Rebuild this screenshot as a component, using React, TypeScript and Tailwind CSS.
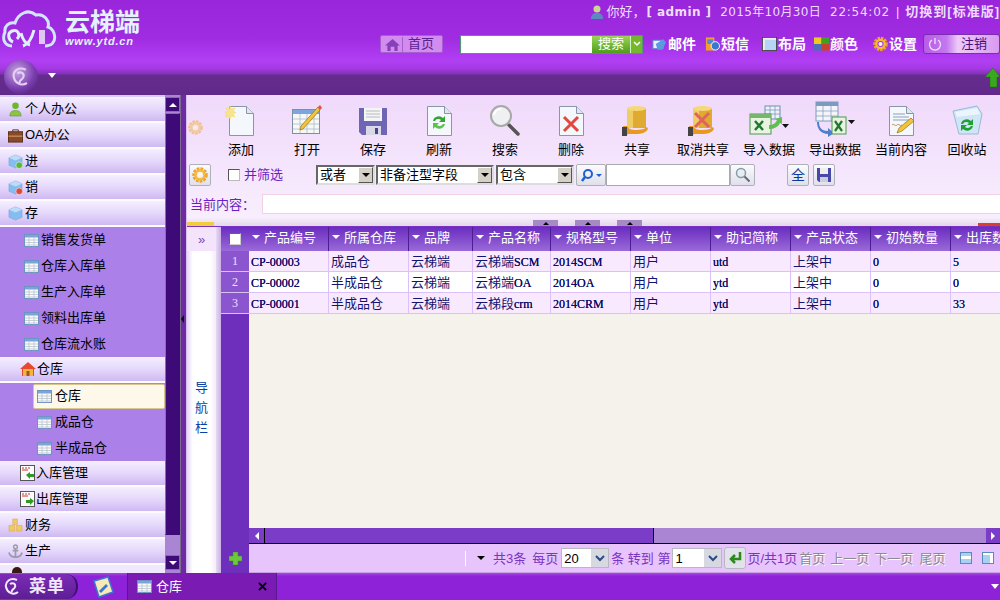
import type { ReactNode } from "react";

const FONT = "[font-family:'Liberation_Sans','Noto_Sans_CJK_SC',sans-serif]";

// little XP style icons
function Sheet({ className = "w-[15px] h-[13px]" }: { className?: string }) {
  return (
    <svg viewBox="0 0 15 13" className={className}>
      <rect x="0.5" y="0.5" width="14" height="12" fill="#fbfbfb" stroke="#6f93c4" />
      <rect x="1" y="1" width="13" height="2.5" fill="#7ba4d8" />
      <path d="M1 6h13M1 8.5h13M1 11h13M5 3.5v9M10 3.5v9" stroke="#b9c3cf" strokeWidth="0.8" />
    </svg>
  );
}

function Page({ children }: { children?: ReactNode }) {
  return (
    <svg viewBox="0 0 32 32" className="w-8 h-8">
      <path d="M4.5 1.5h17l7 7v22h-24z" fill="#f4f8fd" stroke="#8996a8" />
      <path d="M21.5 1.5v7h7" fill="#dfe6ef" stroke="#8996a8" />
      {children}
    </svg>
  );
}

function Barrel({ cross }: { cross?: boolean }) {
  return (
    <svg viewBox="0 0 32 32" className="w-8 h-8">
      <rect x="6" y="3" width="19" height="20" fill="#e0a92f" />
      <rect x="6" y="3" width="6" height="20" fill="#f0cc66" />
      <ellipse cx="15.5" cy="3.5" rx="9.5" ry="2.5" fill="#f5d878" />
      <path d="M3 21h3c2 3 4 4 9 4s9-1 11-3l1 2c-2 4-7 5-12 5H7l-1 1H2v-9z" fill="#e89a1f" />
      <rect x="1" y="22" width="5" height="9" fill="#444" />
      {cross && <path d="M8 8l14 14M22 8L8 22" stroke="#e0645e" strokeWidth="3" />}
    </svg>
  );
}

function Caret({ className = "" }: { className?: string }) {
  return <span className={`inline-block w-0 h-0 border-x-[4px] border-x-transparent border-t-[4px] border-t-black ${className}`} />;
}

function ToolIcon({ name }: { name: string }) {
  if (name === "添加")
    return (
      <Page>
        <path d="M5 1l1.5 3L10 3 8 6l3 1.500-3 1.500 2 3-3.500-1L5 14l-1.500-3L0 12l2-3-2-1.500L3 6 1 3l3.500 1z" fill="#f6e58a" stroke="#f7d95a" strokeWidth="0.5" />
      </Page>
    );
  if (name === "打开")
    return (
      <svg viewBox="0 0 32 32" className="w-8 h-8">
        <rect x="1.500" y="4.500" width="27" height="24" fill="#f7f8f6" stroke="#7e8fa3" />
        <rect x="2" y="5" width="26" height="4" fill="#7ba7dc" />
        <path d="M2 14h26M2 19h26M2 24h26M9 9v19M16 9v19M23 9v19" stroke="#a6bccd" strokeWidth="0.8" />
        <path d="M9 25l3-1L29 5l-2-3L10 21z" fill="#f2c43a" stroke="#9a6e1c" strokeWidth="0.7" />
        <path d="M27 2l2 3 2-2-2-3z" fill="#d9534f" />
      </svg>
    );
  if (name === "保存")
    return (
      <svg viewBox="0 0 32 32" className="w-8 h-8">
        <path d="M2 3h28v27H5l-3-3z" fill="#6e65b5" />
        <rect x="7" y="3" width="18" height="13" fill="#f5f5f5" />
        <path d="M9 6h14M9 9h14M9 12h14" stroke="#b8b8c8" />
        <rect x="9" y="21" width="15" height="9" fill="#d8d8e6" />
        <rect x="18" y="23" width="3" height="6" fill="#4a4488" />
      </svg>
    );
  if (name === "刷新")
    return (
      <Page>
        <path d="M10 16a6 6 0 0 1 10-3l2-2v6h-6l2-2a4 4 0 0 0-6 1z" fill="#35a335" />
        <path d="M22 19a6 6 0 0 1-10 3l-2 2v-6h6l-2 2a4 4 0 0 0 6-1z" fill="#5cc24a" />
      </Page>
    );
  if (name === "搜索")
    return (
      <svg viewBox="0 0 32 32" className="w-8 h-8">
        <path d="M20 20l9 9" stroke="#555" strokeWidth="3.500" strokeLinecap="round" />
        <circle cx="12" cy="11" r="10" fill="#eef0f2" stroke="#a8a8a8" strokeWidth="2" />
        <path d="M5 10a7 7 0 0 1 7-6" stroke="#fff" strokeWidth="2" fill="none" />
      </svg>
    );
  if (name === "删除")
    return (
      <Page>
        <path d="M9 12l14 14M23 12L9 26" stroke="#e2483c" strokeWidth="3" />
      </Page>
    );
  if (name === "共享") return <Barrel />;
  if (name === "取消共享") return <Barrel cross />;
  if (name === "导入数据")
    return (
      <svg viewBox="0 0 40 32" className="w-10 h-8">
        <rect x="16" y="1" width="15" height="13" fill="#eef2f8" stroke="#6f8fb5" />
        <path d="M16 5h15M16 9h15M21 1v13M26 1v13" stroke="#6f8fb5" strokeWidth="0.7" />
        <rect x="1" y="9" width="21" height="20" fill="#e8f3e2" stroke="#4a9a4a" />
        <rect x="1" y="9" width="21" height="4" fill="#74b86a" />
        <path d="M6 16l8 9M14 16l-8 9" stroke="#1f7a2e" strokeWidth="2.500" />
        <path d="M20 20c4 0 7-2 8-5l-2-1 7-2v7l-2-1c-2 4-6 6-11 6z" fill="#5cbf4f" />
        <path d="M33 19h7l-3.500 4z" fill="#111" />
      </svg>
    );
  if (name === "导出数据")
    return (
      <svg viewBox="0 0 40 36" className="w-10 h-9">
        <rect x="1" y="1" width="22" height="19" fill="#f3f5f9" stroke="#7f9ac0" />
        <rect x="1" y="1" width="22" height="4" fill="#7f9ac0" />
        <path d="M1 10h22M1 15h22M8 1v19M16 1v19" stroke="#7f9ac0" strokeWidth="0.7" />
        <path d="M4 21c0 6 3 9 9 9v-3l6 5-6 4v-3C6 33 2 28 2 21z" fill="#4b7fd0" />
        <rect x="17" y="16" width="14" height="17" fill="#e8f3e2" stroke="#4a9a4a" />
        <path d="M20 20l7 10M27 20l-7 10" stroke="#1f7a2e" strokeWidth="2.200" />
        <path d="M33 19h7l-3.500 4z" fill="#111" />
      </svg>
    );
  if (name === "当前内容")
    return (
      <Page>
        <path d="M8 9h12M8 12h16M8 15h16" stroke="#8aa0bd" />
        <path d="M7 20c2-2 3 2 5 0s3 2 5 0" stroke="#c98a3a" fill="none" />
        <path d="M12 28l2-5 12-10 3 3-12 10z" fill="#f2c43a" stroke="#9a6e1c" strokeWidth="0.7" />
      </Page>
    );
  return (
    <svg viewBox="0 0 32 32" className="w-8 h-8">
      <path d="M2 6l24-5 5 8-4 20H8z" fill="#cfe6f7" stroke="#9ab9d6" />
      <path d="M4 7l22-4 3 6-23 3z" fill="#eaf5fd" />
      <path d="M10 19a6 6 0 0 1 10-3l2-2v6h-6l2-2a4 4 0 0 0-6 1z" fill="#22a035" />
      <path d="M22 21a6 6 0 0 1-10 3l-2 2v-6h6l-2 2a4 4 0 0 0 6-1z" fill="#22a035" />
    </svg>
  );
}

function Gear({ className = "w-4 h-4" }: { className?: string }) {
  return (
    <svg viewBox="0 0 16 16" className={className}>
      <circle cx="8" cy="8" r="6" fill="none" stroke="#f0a028" strokeWidth="3.500" strokeDasharray="2.500 1" />
      <circle cx="8" cy="8" r="4.500" fill="none" stroke="#f4b83a" strokeWidth="2.500" />
      <circle cx="8" cy="8" r="2.200" fill="#fff6e0" />
    </svg>
  );
}

function MenuIcon({ name }: { name: string }) {
  const cls = "w-[17px] h-[15px]";
  if (name === "个人办公")
    return (
      <svg viewBox="0 0 16 16" className={cls}>
        <circle cx="8" cy="4" r="3.500" fill="#6fb52f" />
        <path d="M2 15c0-5 3-6 6-6s6 1 6 6z" fill="#8bc540" stroke="#4f8a1c" strokeWidth="0.5" />
      </svg>
    );
  if (name === "OA办公")
    return (
      <svg viewBox="0 0 16 16" className={cls}>
        <rect x="0.500" y="4" width="15" height="11" fill="#8a4a2a" stroke="#5a2e18" />
        <path d="M5 4V2h6v2" stroke="#5a2e18" fill="none" />
        <rect x="0.500" y="8" width="15" height="1.500" fill="#c08a5a" />
      </svg>
    );
  if (name === "进" || name === "销" || name === "存")
    return (
      <svg viewBox="0 0 16 16" className={cls}>
        <path d="M1 4l7-3 7 3v8l-7 3-7-3z" fill="#86bdf0" stroke="#6f9fce" strokeWidth="0.5" />
        <path d="M1 4l7 3 7-3-7-3z" fill="#bcdcf8" />
        {name === "进" && <circle cx="12" cy="12" r="3.500" fill="#59b83a" stroke="#fff" strokeWidth="0.5" />}
        {name === "销" && <circle cx="12" cy="12" r="3.500" fill="#e0483a" stroke="#fff" strokeWidth="0.5" />}
      </svg>
    );
  if (name === "财务")
    return (
      <svg viewBox="0 0 16 16" className={cls}>
        <path d="M5 1h5v6H5zM1 8h6v6H1zM9 8h6v6H9z" fill="#f0c864" stroke="#d8a838" strokeWidth="0.5" />
      </svg>
    );
  if (name === "生产")
    return (
      <svg viewBox="0 0 16 16" className={cls}>
        <circle cx="8" cy="3" r="2" fill="none" stroke="#9a9aa8" strokeWidth="1.500" />
        <path d="M8 5v9M1 9c1 4 4 5 7 5s6-1 7-5M5 7h6" stroke="#9a9aa8" strokeWidth="1.800" fill="none" />
      </svg>
    );
  return null;
}

function Row({ name, indent }: { name: string; indent?: "house" | "in" | "out" }) {
  return (
    <div className="h-[26px] shrink-0 flex items-center border-b-2 border-b-white/80 bg-[linear-gradient(180deg,#f5efff_0%,#e5d8fb_50%,#cfb9f3_100%)] text-[13px] text-black">
      {indent === "house" ? (
        <svg viewBox="0 0 16 16" className="ml-5 w-4 h-4">
          <path d="M8 1l8 7h-2v7H2V8H0z" fill="#e8482e" />
          <rect x="3" y="8" width="10" height="7" fill="#f2b63c" />
          <rect x="6.500" y="10" width="3" height="5" fill="#9a5a1c" />
        </svg>
      ) : indent ? (
        <svg viewBox="0 0 15 16" className="ml-5 w-[15px] h-4">
          <rect x="0.500" y="0.500" width="14" height="15" fill="#fbfbfb" stroke="#555" />
          <path d="M2 3h2M5 3h2M8 3h2M2 5h6" stroke="#d0352c" />
          <path d={indent === "in" ? "M6 10l4-3v2h4v3h-4v2z" : "M14 10l-4-3v2H6v3h4v2z"} fill="#2f9a22" />
        </svg>
      ) : (
        <span className="ml-[7px] flex"><MenuIcon name={name} /></span>
      )}
      <span className="ml-px">{name}</span>
    </div>
  );
}

function Sub({ name, deep, active }: { name: string; deep?: boolean; active?: boolean }) {
  return (
    <div className="h-[26px] shrink-0 flex items-center bg-[#ab80e9] text-[13px] text-black">
      <div
        className={`h-[25px] flex items-center ${deep ? "ml-[33px] w-[132px] pl-[3px]" : "ml-[23px] pl-0"} ${
          active ? "bg-[#fdf8ea] border border-[#d8c890] rounded-[2px]" : "border border-transparent"
        }`}
      >
        <Sheet />
        <span className={deep ? "ml-[3px]" : "ml-[2px]"}>{name}</span>
      </div>
    </div>
  );
}

function SideScroll() {
  const Btn = ({ up }: { up?: boolean }) => (
    <div className="h-[15px] flex items-center justify-center bg-[#3d0a78] border border-[#e85a1a]">
      <span className={`w-0 h-0 border-x-[4px] border-x-transparent ${up ? "border-b-[4px] border-b-white" : "border-t-[4px] border-t-white"}`} />
    </div>
  );
  return (
    <div className="w-[16px] flex flex-col bg-[#a985d3] border-r border-[#7a6a90]">
      <div className="h-[2px]" />
      <Btn up />
      <div className="h-px" />
      <div className="h-[422px] bg-[#3d0a78] border border-[#e85a1a] border-r-[#3d0a78] border-b-[#3d0a78]" />
      <div className="flex-1" />
      <Btn />
      <div className="h-[3px]" />
    </div>
  );
}

function Sidebar() {
  return (
    <div className="w-[187px] shrink-0 flex bg-[#7b2bb5]">
      <div className="w-[165px] shrink-0 flex flex-col overflow-hidden bg-[#d9c9f6] pt-[2px]">
        <Row name="个人办公" />
        <Row name="OA办公" />
        <Row name="进" />
        <Row name="销" />
        <Row name="存" />
        <Sub name="销售发货单" />
        <Sub name="仓库入库单" />
        <Sub name="生产入库单" />
        <Sub name="领料出库单" />
        <Sub name="仓库流水账" />
        <Row name="仓库" indent="house" />
        <Sub name="仓库" deep active />
        <Sub name="成品仓" deep />
        <Sub name="半成品仓" deep />
        <Row name="入库管理" indent="in" />
        <Row name="出库管理" indent="out" />
        <Row name="财务" />
        <Row name="生产" />
        <div className="flex-1 bg-[#f0e8fd] pl-[12px]">
          <span className="block w-[10px] h-[8px] mt-[2px] rounded-t-full bg-[#3a1a10]" />
        </div>
      </div>
      <SideScroll />
      <div className="flex-1 flex items-center bg-[#6d2aa3] border-r border-[#d8c0f0]">
        <span className="w-0 h-0 mt-[-30px] border-y-[4px] border-y-transparent border-r-[3px] border-r-black" />
      </div>
    </div>
  );
}

function Header() {
  const links: [string, ReactNode, string][] = [
    ["邮件", <svg key="m" viewBox="0 0 16 16" className="w-[15px] h-4"><rect x="1" y="4" width="11" height="9" fill="#e8f0fa" stroke="#5a8ac8" /><path d="M4 8l8-5 3 3-4 8H6z" fill="#5a9ae0" /></svg>, "ml-[9px]"],
    ["短信", <svg key="s" viewBox="0 0 16 16" className="w-[15px] h-4"><rect x="1" y="1" width="9" height="14" fill="#f0a030" /><rect x="2.500" y="3" width="6" height="5" fill="#4a8ae0" /><circle cx="11" cy="10" r="4.500" fill="#3a78d0" stroke="#fff" /></svg>, "ml-[9px]"],
    ["布局", <svg key="l" viewBox="0 0 16 16" className="w-[15px] h-4"><rect x="0.500" y="1" width="15" height="14" fill="#b8d4f4" stroke="#444" /><rect x="1" y="1.500" width="14" height="2" fill="#eee" /><rect x="1" y="3.500" width="2" height="11" fill="#eee" /></svg>, "ml-[13px]"],
    ["颜色", <svg key="c" viewBox="0 0 16 16" className="w-[15px] h-4"><rect x="0" y="1" width="8" height="7" fill="#f0c820" /><rect x="8" y="1" width="8" height="7" fill="#40a020" /><rect x="0" y="8" width="8" height="7" fill="#4a70b8" /><rect x="8" y="8" width="8" height="7" fill="#c84030" /></svg>, "ml-[8px]"],
    ["设置", <Gear key="g" className="w-[15px] h-4" />, "ml-[15px]"],
  ];
  return (
    <div className="h-[95px] shrink-0 flex flex-col bg-[linear-gradient(180deg,#9a26dc_0%,#a02ce2_40%,#b13ff4_64%,#a639e4_72%,#7f33b4_78%,#652c8e_79%,#602a8a_100%)]">
      <div className="h-[60px] flex">
        <div className="w-[140px] shrink-0 flex pt-[8px] pl-[2px]">
          <svg viewBox="0 0 60 40" className="w-[60px] h-[40px]">
            <path d="M10 38C2 38 0 30 3 24c-1-6 4-10 10-9C16 6 26 0 34 7c8-2 14 6 12 12 8 2 11 19-3 19" fill="none" stroke="#cfe6fb" strokeWidth="3" />
            <path d="M11 34c-5-2-6-9-1-11 6-2 9 4 5 8M19 25c2 8 5 11 9 12M32 22c-2 8-5 14-11 16" fill="none" stroke="#dff0fd" strokeWidth="3" />
            <rect x="37" y="22" width="6" height="14" fill="#e0c8f5" />
          </svg>
          <div className="text-[#e4f2fd] ml-[3px] mt-[1px]">
            <div className={`text-[25px] leading-[26px] font-bold ${FONT}`}>云梯端</div>
            <div className="text-[11px] leading-[12px] font-bold italic tracking-[0.8px] [font-family:'Liberation_Sans',sans-serif]">www.ytd.cn</div>
          </div>
        </div>
        <div className="flex-1 min-w-0 flex flex-col">
          <div className="h-[24px] flex items-center justify-end text-[13px] text-[#eedcfb] whitespace-nowrap overflow-hidden">
            <svg viewBox="0 0 14 14" className="w-[14px] h-[14px]">
              <circle cx="7" cy="4" r="3.500" fill="#c8d890" />
              <path d="M1 14c0-5 3-6 6-6s6 1 6 6z" fill="#5a8ac0" />
            </svg>
            <span className="ml-[3px]">你好，</span>
            <span className="ml-px font-bold tracking-[0.4px] [font-family:'DejaVu_Sans','Noto_Sans_CJK_SC',sans-serif] text-[12px]">[ admin ]</span>
            <span className="ml-[9px] tracking-[0.33px] [font-family:'DejaVu_Sans','Noto_Sans_CJK_SC',sans-serif] text-[12px]">2015年10月30日</span>
            <span className="ml-[9px] tracking-[0.75px] [font-family:'DejaVu_Sans',sans-serif] text-[12px]">22:54:02</span>
            <span className="ml-[6px]">|</span>
            <span className="ml-[6px] font-bold tracking-[1px]">切换到[标准版]</span>
          </div>
          <div className="h-[24px] mt-[8px] flex items-center text-[13px] whitespace-nowrap">
            <div className="ml-[240px] w-[63px] h-[18px] shrink-0 flex items-center rounded-[2px] bg-[#d28cf0] border border-[#a75fd0]">
              <svg viewBox="0 0 16 14" className="ml-[4px] w-[15px] h-[13px]">
                <path d="M8 1L0 8h2.500v6H6V9.500h4V14h3.500V8H16z" fill="#8840b8" />
              </svg>
              <span className="ml-[2px] w-px h-[15px] bg-[#a75fd0]" />
              <span className="ml-[5px] text-[#5a2190]">首页</span>
            </div>
            <div className="ml-[17px] h-[19px] shrink-0 flex border border-[#4f9a70]">
              <div className="w-[131px] bg-white" />
              <div className="w-[38px] flex items-center justify-center bg-[linear-gradient(180deg,#9cd455,#4f9c1c)] text-white">搜索</div>
              <div className="w-[12px] flex items-center justify-center bg-[#75b82e] border-l border-[#d5f0c0]">
                <svg viewBox="0 0 8 6" className="w-2 h-[6px]"><path d="M1 1l3 3 3-3" stroke="#fff" strokeWidth="1.500" fill="none" /></svg>
              </div>
            </div>
            {links.map(([label, icon, gap]) => (
              <div key={label} className={`shrink-0 flex items-center ${gap}`}>
                {icon}
                <span className="ml-px text-[14px] font-bold text-white">{label}</span>
              </div>
            ))}
            <div className="ml-[6px] w-[77px] shrink-0 h-[20px] flex items-center rounded-[3px] border border-[#7a2fb0] bg-[linear-gradient(90deg,#b85ce8_0%,#c278ee_30%,#edc9f8_45%,#d99af2_100%)]">
              <svg viewBox="0 0 14 14" className="ml-[4px] w-[14px] h-[14px]">
                <path d="M4 3a5.500 5.500 0 1 0 6 0M7 1v6" stroke="#f2e0fb" strokeWidth="1.300" fill="none" />
              </svg>
              <span className="ml-[19px] text-[#46107a]">注销</span>
            </div>
          </div>
        </div>
      </div>
      <div className="flex-1 flex items-start">
        <div className="ml-[4px] w-[34px] h-[34px] rounded-full bg-[radial-gradient(circle_at_40%_35%,#c8a4e4,#7b3fb0_55%,#3d1a66)] flex items-center justify-center">
          <svg viewBox="0 0 20 20" className="w-6 h-6"><path d="M14 4C8 1 3 5 4 10s6 8 11 5M7 7c3-2 6 0 5 3s-4 2-3 5" stroke="#e4d0f2" strokeWidth="1.800" fill="none" /></svg>
        </div>
        <span className="ml-[10px] mt-[13px] w-0 h-0 border-x-[4px] border-x-transparent border-t-[5px] border-t-white" />
        <svg viewBox="0 0 15 20" className="ml-auto mt-[8px] w-[15px] h-[20px]">
          <path d="M8 0l7 9h-3v10H5V9H0z" fill="#3aa81e" stroke="#1f6e10" strokeWidth="0.500" />
        </svg>
      </div>
    </div>
  );
}

const TOOLS = ["添加", "打开", "保存", "刷新", "搜索", "删除", "共享", "取消共享", "导入数据", "导出数据", "当前内容", "回收站"];

function Toolbar() {
  return (
    <div className="h-[65px] flex items-start">
      <div className="w-[21px] shrink-0 pt-[25px] pl-[1px]">
        <Gear className="w-[15px] h-[15px] opacity-50" />
      </div>
      {TOOLS.map((t) => (
        <div key={t} className="w-[66px] shrink-0 flex flex-col items-center">
          <div className="h-[34px] mt-[8px] flex items-end justify-center">
            <ToolIcon name={t} />
          </div>
          <span className="mt-[5px] text-[13px] leading-[16px] text-black whitespace-nowrap">{t}</span>
        </div>
      ))}
    </div>
  );
}

function XpSelect({ label, className }: { label: string; className: string }) {
  return (
    <div className={`h-[20px] flex items-center justify-between bg-white border-2 border-t-[#666] border-l-[#666] border-r-[#ddd] border-b-[#ddd] ${className}`}>
      <span className="pl-[2px] text-[13px] leading-[16px] text-black whitespace-nowrap">{label}</span>
      <span className="w-[15px] h-[16px] flex items-center justify-center bg-[#d4d0c8] border border-t-white border-l-white border-r-[#555] border-b-[#555]">
        <Caret />
      </span>
    </div>
  );
}

function IconBtn({ children, className }: { children: ReactNode; className: string }) {
  return (
    <div className={`h-[22px] flex items-center justify-center rounded-[2px] border border-[#b0b0b8] bg-[linear-gradient(180deg,#fbfbfd,#dfe0ea)] ${className}`}>
      {children}
    </div>
  );
}

function FilterRow() {
  return (
    <div className="h-[30px] flex items-start pt-[4px]">
      <IconBtn className="ml-[2px] w-[22px]"><Gear /></IconBtn>
      <div className="ml-[17px] mt-[5px] w-[12px] h-[12px] bg-white border border-t-[#555] border-l-[#555] border-r-[#bbb] border-b-[#bbb]" />
      <span className="ml-[4px] mt-[3px] text-[13px] leading-[16px] text-[#6a1fc4]">并筛选</span>
      <XpSelect label="或者" className="ml-[33px] w-[59px] mt-px" />
      <XpSelect label="非备注型字段" className="ml-px w-[118px] mt-px" />
      <XpSelect label="包含" className="ml-[2px] w-[78px] mt-px" />
      <IconBtn className="ml-[2px] w-[30px]">
        <svg viewBox="0 0 22 14" className="w-[22px] h-[14px]">
          <circle cx="8" cy="6" r="4" fill="none" stroke="#1f5fd0" strokeWidth="2" />
          <path d="M5 9l-3 4" stroke="#1f5fd0" strokeWidth="2.500" />
          <path d="M16 6h6l-3 3z" fill="#1f5fd0" />
        </svg>
      </IconBtn>
      <div className="w-[124px] h-[22px] bg-white border border-[#a8a8b0]" />
      <IconBtn className="w-[25px]">
        <svg viewBox="0 0 16 16" className="w-4 h-4">
          <circle cx="6" cy="6" r="4.500" fill="#e6eef4" stroke="#8a9aa8" strokeWidth="1.500" />
          <path d="M9.500 9.500l5 5" stroke="#667" strokeWidth="2" />
        </svg>
      </IconBtn>
      <IconBtn className="ml-[32px] w-[22px]">
        <span className="text-[14px] leading-none text-[#0a3aa0]">全</span>
      </IconBtn>
      <IconBtn className="ml-[4px] w-[22px]">
        <svg viewBox="0 0 16 16" className="w-4 h-4">
          <path d="M1 1h14v14H3l-2-2z" fill="#4848a8" />
          <rect x="4" y="1" width="8" height="6" fill="#eee" />
          <rect x="4" y="10" width="8" height="5" fill="#ccd" />
        </svg>
      </IconBtn>
    </div>
  );
}

const COLS = [
  { title: "产品编号", w: "w-[80px]" },
  { title: "所属仓库", w: "w-[80px]" },
  { title: "品牌", w: "w-[64px]" },
  { title: "产品名称", w: "w-[78px]" },
  { title: "规格型号", w: "w-[80px]" },
  { title: "单位", w: "w-[80px]" },
  { title: "助记简称", w: "w-[80px]" },
  { title: "产品状态", w: "w-[80px]" },
  { title: "初始数量", w: "w-[80px]" },
  { title: "出库数量", w: "w-[80px]" },
];

const ROWS = [
  ["CP-00003", "成品仓", "云梯端", "云梯端SCM", "2014SCM", "用户", "utd", "上架中", "0", "5"],
  ["CP-00002", "半成品仓", "云梯端", "云梯端OA", "2014OA", "用户", "ytd", "上架中", "0", "0"],
  ["CP-00001", "半成品仓", "云梯端", "云梯段crm", "2014CRM", "用户", "ytd", "上架中", "0", "33"],
];

// latin in the cells is smaller serif, chinese is a size up
function Cell({ value }: { value: string }) {
  return (
    <>
      {value.split(/([A-Za-z0-9-]+)/).map((part, i) =>
        /[A-Za-z0-9-]/.test(part) ? (
          <span key={i} className="text-[12px] text-[#0c0c66] [text-shadow:0_0_0.2px_#0c0c66]">{part}</span>
        ) : (
          <span key={i} className="text-[13px] text-[#14146e]">{part}</span>
        ),
      )}
    </>
  );
}

function Grid() {
  return (
    <div className="h-[347px] flex border-t border-[#7a32c4]">
      <div className="w-[29px] shrink-0 flex flex-col bg-[linear-gradient(90deg,#e6d4f6,#ffffff_20%,#ffffff_80%,#f4ecfa)]">
        <div className="h-[24px] flex items-center justify-center bg-[#f3e4fb] text-[13px] leading-none text-[#7d45b8]">»</div>
        <div className="flex-1 flex flex-col items-center justify-center text-[13px] leading-[20px] text-[#0a3fa8] pb-[8px]">
          <span>导</span>
          <span>航</span>
          <span>栏</span>
        </div>
      </div>
      <div className="w-[5px] shrink-0 bg-[linear-gradient(90deg,#e8d8f4,#c9b2e4)]" />
      <div className="w-[28px] shrink-0 flex flex-col bg-[#6d2fbc]">
        <div className="h-[24px] flex items-center justify-center bg-[linear-gradient(180deg,#6a2cc0,#9a6ad8)]">
          <span className="w-[12px] h-[12px] bg-white border border-t-[#666] border-l-[#666] border-r-[#ccc] border-b-[#ccc]" />
        </div>
        {ROWS.map((_, i) => (
          <div key={i} className="h-[21px] flex items-center justify-center bg-[#8a55cf] border-b border-[#d8c4f0] text-[12px] text-[#eee2fb] [font-family:'Liberation_Serif',serif]">
            {i + 1}
          </div>
        ))}
        <div className="mt-auto h-[29px] flex items-center justify-center">
          <svg viewBox="0 0 13 13" className="w-[13px] h-[13px]">
            <path d="M4 0h5v4h4v5H9v4H4V9H0V4h4z" fill="#6cc83c" stroke="#3a8a1c" strokeWidth="0.500" />
          </svg>
        </div>
      </div>
      <div className="flex-1 min-w-0 flex flex-col overflow-hidden">
        <div className="h-[24px] shrink-0 flex bg-[linear-gradient(180deg,#6a2cc0,#9a6ad8)]">
          {COLS.map((c) => (
            <div key={c.title} className={`${c.w} shrink-0 flex items-center border-r border-[#4a1f90] text-[13px] leading-none text-white whitespace-nowrap pb-[3px] pl-[3px]`}>
              <span className="mr-[4px] mb-[2px] w-0 h-0 border-x-[4px] border-x-transparent border-t-[4px] border-t-white" />
              {c.title}
            </div>
          ))}
        </div>
        {ROWS.map((r, i) => (
          <div key={r[0]} className={`h-[21px] shrink-0 flex border-b border-[#dcc0fa] ${i === 1 ? "bg-white" : "bg-[#f9e9ff]"}`}>
            {r.map((v, j) => (
              <div key={j} className={`${COLS[j].w} shrink-0 pl-[2px] flex items-center border-r border-[#dcc0fa] whitespace-nowrap overflow-hidden [font-family:'Liberation_Serif','Noto_Sans_CJK_SC',serif]`}>
                <span><Cell value={v} /></span>
              </div>
            ))}
          </div>
        ))}
        <div className="flex-1 bg-[#f5f2ec]" />
        <div className="h-[16px] shrink-0 flex bg-[#a985d3] border-b border-black">
          <div className="w-[16px] flex items-center justify-center bg-[#7b3cc8] border-r border-black">
            <span className="w-0 h-0 border-y-[4px] border-y-transparent border-r-[4px] border-r-white" />
          </div>
          <div className="w-[389px] bg-[#7b3cc8] border-r border-black" />
          <div className="flex-1" />
          <div className="w-[14px] flex items-center justify-center bg-[#7b3cc8]">
            <span className="w-0 h-0 border-y-[4px] border-y-transparent border-l-[4px] border-l-white" />
          </div>
        </div>
        <Pager />
      </div>
    </div>
  );
}

function PagerSelect({ value, w }: { value: string; w: string }) {
  return (
    <div className={`${w} h-[20px] flex items-center justify-between border border-[#b8b8c0] bg-white`}>
      <span className="pl-[2px] text-[13px] leading-none text-black">{value}</span>
      <span className="w-[17px] h-full flex items-center justify-center bg-[#d8d8e0]">
        <svg viewBox="0 0 10 7" className="w-[10px] h-[7px]"><path d="M1 1l4 4 4-4" stroke="#2a4a8a" strokeWidth="2" fill="none" /></svg>
      </span>
    </div>
  );
}

function Pager() {
  const off = "text-[#8a8a96] [text-shadow:1px_1px_0_#fff]";
  return (
    <div className="h-[29px] shrink-0 flex items-center bg-[#e8c4fc] border-b border-[#c9a0e6] text-[13px] leading-none text-[#7a35c0] whitespace-nowrap overflow-hidden">
      <span className="ml-[216px] w-px h-[15px] bg-white" />
      <span className="ml-[11px] w-0 h-0 border-x-[4px] border-x-transparent border-t-[4px] border-t-black" />
      <span className="ml-[8px]">共3条</span>
      <span className="ml-[6px]">每页</span>
      <span className="ml-[3px]"><PagerSelect value="20" w="w-[48px]" /></span>
      <span className="ml-[2px]">条 转到 第</span>
      <span className="ml-[2px]"><PagerSelect value="1" w="w-[50px]" /></span>
      <span className="ml-[2px] w-[22px] h-[22px] flex items-center justify-center rounded-[3px] border border-[#b8b8c0] bg-[#e2e2ea]">
        <svg viewBox="0 0 16 14" className="w-4 h-[14px]"><path d="M13 1v7H6M8 4L4 8l4 4" stroke="#2a8a1c" strokeWidth="2.500" fill="none" /></svg>
      </span>
      <span className="ml-px">页/共1页</span>
      <span className={`ml-[2px] ${off}`}>首页</span>
      <span className={`ml-[5px] ${off}`}>上一页</span>
      <span className={`ml-[5px] ${off}`}>下一页</span>
      <span className={`ml-[6px] ${off}`}>尾页</span>
      <svg viewBox="0 0 12 12" className="ml-[15px] w-3 h-3 shrink-0">
        <rect x="0.500" y="0.500" width="11" height="11" fill="#a8d0f4" stroke="#5a8ab8" />
        <rect x="1" y="4" width="10" height="3" fill="#fff" />
      </svg>
      <svg viewBox="0 0 12 12" className="ml-[10px] w-3 h-3 shrink-0">
        <rect x="0.500" y="0.500" width="11" height="11" fill="#a8d0f4" stroke="#5a8ab8" />
        <rect x="1" y="1" width="10" height="2" fill="#fff" />
        <rect x="8" y="3" width="3" height="8" fill="#fff" />
      </svg>
    </div>
  );
}

function Main() {
  return (
    <div className="flex-1 min-w-0 flex flex-col overflow-hidden bg-[linear-gradient(180deg,#f0d9fb_0%,#f8effd_130px)]">
      <Toolbar />
      <FilterRow />
      <div className="h-[28px] flex items-center">
        <span className="ml-[3px] w-[72px] shrink-0 text-[13px] leading-none text-[#6a1fc4] whitespace-nowrap">当前内容：</span>
        <div className="flex-1 h-[20px] bg-white border-y border-l border-[#f2d2e2]" />
      </div>
      <div className="h-[8px] flex bg-[linear-gradient(180deg,#f6ecfb,#e2d8e8)]">
        <div className="w-[27px] h-[4px] self-end bg-[#f2cc3c]" />
        {["a", "b", "c"].map((k, i) => (
          <div key={k} className={`w-[25px] h-[6px] self-end flex items-center justify-center bg-[#a68ac4] ${i === 0 ? "ml-[319px]" : "ml-[17px]"}`}>
            <span className="w-0 h-0 border-x-[3px] border-x-transparent border-b-[3px] border-b-black" />
          </div>
        ))}
        <div className="ml-auto w-[22px] h-[3px] self-end bg-[#d8402c]" />
      </div>
      <Grid />
    </div>
  );
}

function Taskbar() {
  return (
    <div className="h-[27px] shrink-0 flex items-center bg-[linear-gradient(180deg,#a64ae0_0%,#8d22d8_12%,#8d22d8_100%)]">
      <div className="w-[78px] h-[25px] flex items-center rounded-r-[12px] border-r-2 border-[#3d1070] bg-[linear-gradient(180deg,#7d2bb8,#5c1f94)]">
        <svg viewBox="0 0 20 20" className="ml-[3px] w-[20px] h-[20px]">
          <path d="M14 3C7 0 2 5 3 10s7 9 12 5M7 7c3-2 6 0 5 3s-4 2-3 5" stroke="#f2eafa" strokeWidth="2" fill="none" />
        </svg>
        <span className="ml-[6px] text-[17px] leading-none font-bold tracking-[1px] text-[#f0e8fa]">菜单</span>
      </div>
      <svg viewBox="0 0 22 22" className="ml-[14px] w-[22px] h-[22px]">
        <path d="M2 5l14-4 5 15-14 5z" fill="#f7e9b8" stroke="#3a78d0" strokeWidth="1.500" />
        <path d="M7 15l7-7 2 2-7 7z" fill="#3a78d0" />
      </svg>
      <div className="ml-[13px] w-[150px] h-[27px] flex items-center bg-[#7a1cb4] border-x border-[#5a1890] text-[13px] text-white">
        <span className="ml-[9px] flex"><Sheet /></span>
        <span className="ml-[4px]">仓库</span>
        <svg viewBox="0 0 10 10" className="ml-auto mr-[9px] w-[9px] h-[9px]">
          <path d="M1 1l8 8M9 1l-8 8" stroke="#000" strokeWidth="2.200" />
        </svg>
      </div>
      <span className="ml-auto mr-[1px] w-0 h-0 border-x-[4px] border-x-transparent border-t-[5px] border-t-white" />
    </div>
  );
}

export default function App() {
  return (
    <div className={`w-[1000px] h-[600px] flex flex-col overflow-hidden ${FONT}`}>
      <Header />
      <div className="h-[478px] shrink-0 flex">
        <Sidebar />
        <Main />
      </div>
      <Taskbar />
    </div>
  );
}
